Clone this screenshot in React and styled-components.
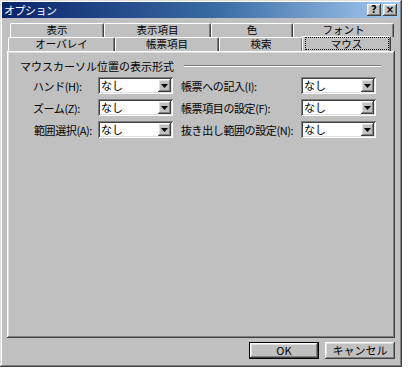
import React from "react";
import styled, { createGlobalStyle } from "styled-components";

const GlobalStyle = createGlobalStyle`
  html, body {
    margin: 0;
    padding: 0;
    background: #ffffff;
  }
  body {
    font-family: "MS UI Gothic", "Noto Sans CJK JP", "DejaVu Sans", sans-serif;
    font-size: 11px;
    color: #000;
  }
`;

const raised = `
  box-shadow: inset -1px -1px #404040, inset 1px 1px #ffffff,
    inset -2px -2px #808080, inset 2px 2px #dfdfdf;
`;

const sunken = `
  box-shadow: inset 1px 1px #808080, inset -1px -1px #ffffff,
    inset 2px 2px #404040, inset -2px -2px #dfdfdf;
`;

const Dialog = styled.div`
  width: 402px;
  height: 367px;
  box-sizing: border-box;
  padding: 2px 3px 3px 2px;
  background: #c0c0c0;
  display: flex;
  flex-direction: column;
  box-shadow: inset -1px -1px #404040, inset 1px 1px #dfdfdf,
    inset -2px -2px #808080, inset 2px 2px #ffffff;
`;

const TitleBar = styled.div`
  height: 16px;
  display: flex;
  align-items: center;
  justify-content: space-between;
  padding: 0 2px 0 2px;
  background: linear-gradient(90deg, #0a246a 0%, #3a6ea5 55%, #a6caf0 100%);
  color: #fff;
  font-size: 11px;
`;

const TitleText = styled.span`
  letter-spacing: -0.5px;
`;

const TitleButtons = styled.div`
  display: flex;
  gap: 2px;
`;

const TitleButton = styled.div`
  width: 14px;
  height: 12px;
  background: #c0c0c0;
  ${raised}
  color: #000;
  font-family: "DejaVu Sans", sans-serif;
  font-weight: bold;
  font-size: 10px;
  line-height: 12px;
  text-align: center;
`;

const Body = styled.div`
  flex: 1;
  display: flex;
  flex-direction: column;
  padding: 5px 4px 0 5px;
`;

const TabRow = styled.div`
  display: flex;
  align-items: flex-end;
  height: ${(p) => p.$height}px;
  padding-left: ${(p) => p.$indent}px;
  position: relative;
  z-index: ${(p) => p.$z};
`;

const Tab = styled.div`
  width: ${(p) => p.$w}px;
  height: 100%;
  box-sizing: border-box;
  border-top: 1px solid #ffffff;
  border-left: 1px solid #ffffff;
  border-right: 1px solid #404040;
  box-shadow: inset -1px 0 #808080;
  border-radius: 2px 2px 0 0;
  background: #c0c0c0;
  text-align: center;
  font-size: 10.5px;
  line-height: 11px;
  white-space: nowrap;
  ${(p) =>
    p.$active &&
    `
    height: 16px;
    margin-left: -1px;
    margin-right: -1px;
    margin-bottom: -1px;
    position: relative;
    z-index: 3;
    padding-top: 1px;
  `}
`;

const TabLabel = styled.span`
  ${(p) =>
    p.$focus &&
    `outline: 1px dotted #000; display: inline-block; width: 82px; line-height: 11px;`}
`;

const Panel = styled.div`
  height: 287px;
  box-sizing: border-box;
  background: #c0c0c0;
  ${raised}
  padding: 8px 13px 0 13px;
  position: relative;
  z-index: 2;
`;

const GroupHead = styled.div`
  display: flex;
  align-items: center;
  gap: 6px;
  padding-right: 1px;
  height: 13px;
`;

const GroupLine = styled.div`
  flex: 1;
  height: 0;
  border-top: 1px solid #808080;
  border-bottom: 1px solid #ffffff;
  margin-left: 4px;
`;

const FieldGrid = styled.div`
  display: grid;
  grid-template-columns: 65px 75px 128px 75px;
  grid-auto-rows: 17px;
  row-gap: 5px;
  padding: 5px 0 0 13px;
  align-items: center;
`;

const Label = styled.label`
  white-space: nowrap;
  font-size: 11px;
  padding-left: ${(p) => p.$pad || 0}px;
  letter-spacing: -0.4px;
`;

const Combo = styled.div`
  height: 17px;
  box-sizing: border-box;
  background: #fff;
  ${sunken}
  display: flex;
  align-items: center;
  padding: 2px;
`;

const ComboText = styled.span`
  flex: 1;
  padding-left: 1px;
  line-height: 13px;
`;

const DropButton = styled.div`
  width: 13px;
  height: 13px;
  background: #c0c0c0;
  ${raised}
  display: flex;
  align-items: center;
  justify-content: center;
`;

const Footer = styled.div`
  display: flex;
  justify-content: flex-end;
  gap: 6px;
  padding-top: 4px;
`;

const Button = styled.div`
  width: 70px;
  height: 17px;
  box-sizing: border-box;
  background: #c0c0c0;
  ${raised}
  ${(p) => p.$default && `border: 1px solid #000;`}
  text-align: center;
  font-size: 11px;
  line-height: ${(p) => (p.$default ? 15 : 17)}px;
`;

const Arrow = () => (
  <svg width="7" height="4" viewBox="0 0 7 4">
    <path d="M0 0h7L3.5 4z" fill="#000" />
  </svg>
);

const ComboBox = ({ value }) => (
  <Combo>
    <ComboText>{value}</ComboText>
    <DropButton>
      <Arrow />
    </DropButton>
  </Combo>
);

const backTabs = [
  { label: "表示", w: 94 },
  { label: "表示項目", w: 107 },
  { label: "色", w: 82 },
  { label: "フォント", w: 101 },
];

const frontTabs = [
  { label: "オーバレイ", w: 107 },
  { label: "帳票項目", w: 104 },
  { label: "検索", w: 84 },
  { label: "マウス", w: 89, active: true },
];

const rows = [
  ["ハンド(H):", 0, "帳票への記入(I):"],
  ["ズーム(Z):", 0, "帳票項目の設定(F):"],
  ["範囲選択(A):", 1, "抜き出し範囲の設定(N):"],
];

export default function App() {
  return (
    <>
      <GlobalStyle />
      <Dialog>
        <TitleBar>
          <TitleText>オプション</TitleText>
          <TitleButtons>
            <TitleButton>?</TitleButton>
            <TitleButton>×</TitleButton>
          </TitleButtons>
        </TitleBar>
        <Body>
          <TabRow $height={14} $indent={3} $z={0}>
            {backTabs.map((t) => (
              <Tab key={t.label} $w={t.w}>
                {t.label}
              </Tab>
            ))}
          </TabRow>
          <TabRow $height={14} $indent={1} $z={1}>
            {frontTabs.map((t) => (
              <Tab key={t.label} $w={t.w} $active={t.active}>
                <TabLabel $focus={t.active}>{t.label}</TabLabel>
              </Tab>
            ))}
          </TabRow>
          <Panel>
            <GroupHead>
              <span>マウスカーソル位置の表示形式</span>
              <GroupLine />
            </GroupHead>
            <FieldGrid>
              {rows.map(([left, pad, right]) => (
                <React.Fragment key={left}>
                  <Label $pad={pad}>{left}</Label>
                  <ComboBox value="なし" />
                  <Label $pad={8}>{right}</Label>
                  <ComboBox value="なし" />
                </React.Fragment>
              ))}
            </FieldGrid>
          </Panel>
          <Footer>
            <Button $default>OK</Button>
            <Button>キャンセル</Button>
          </Footer>
        </Body>
      </Dialog>
    </>
  );
}
